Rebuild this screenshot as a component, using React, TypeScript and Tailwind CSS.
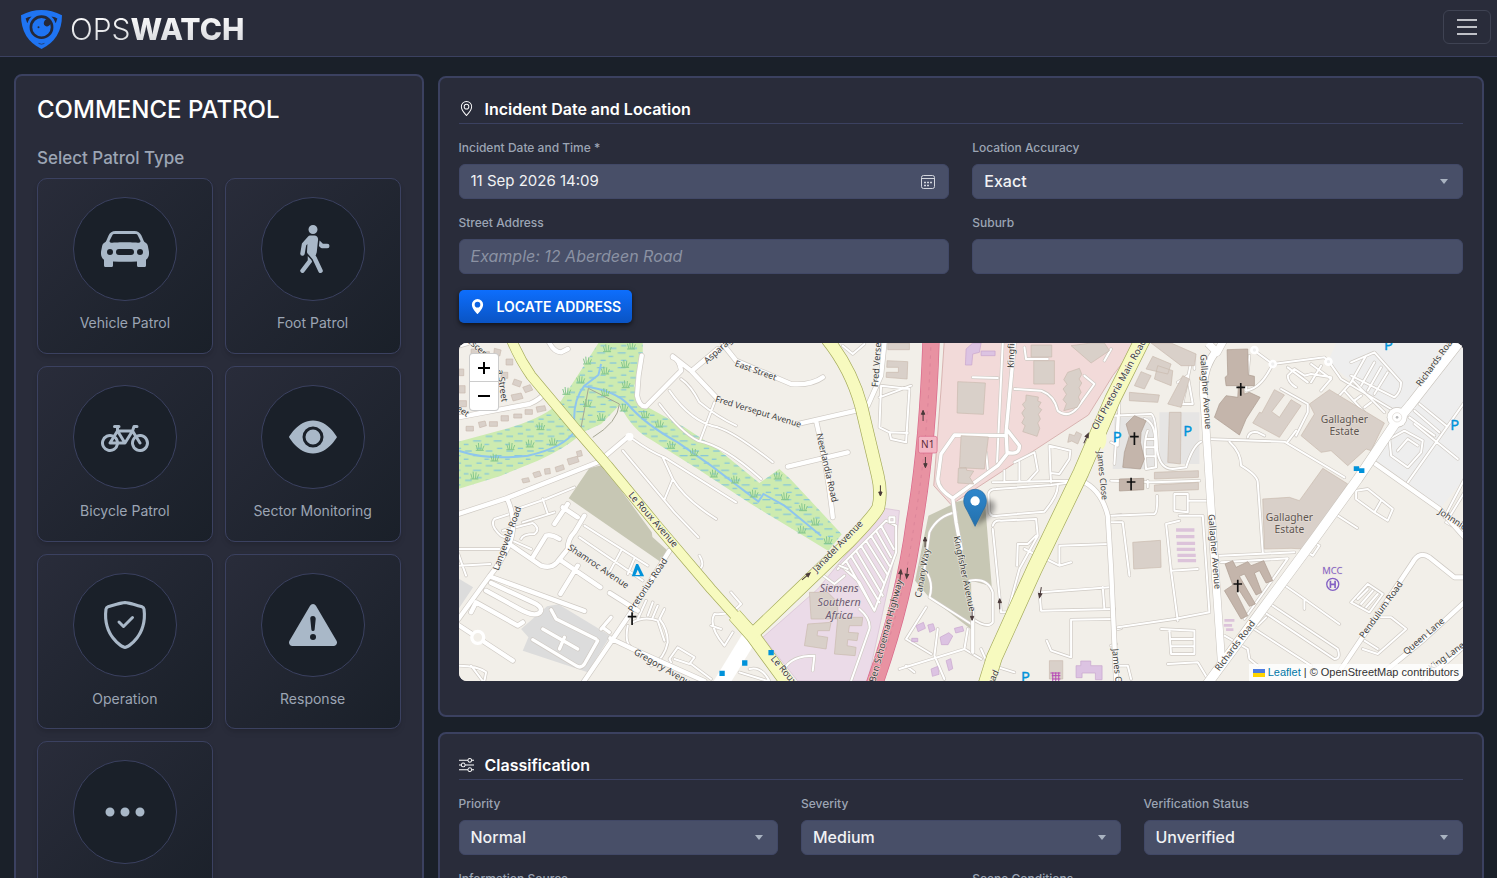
import { useId } from "react";
import type { ReactNode } from "react";
import type { IconType } from "react-icons";
import {
    BsBicycle,
    BsCarFrontFill,
    BsExclamationTriangleFill,
    BsEyeFill,
    BsGeoAlt,
    BsGeoAltFill,
    BsPersonWalking,
    BsShieldCheck,
    BsSliders,
    BsThreeDots,
} from "react-icons/bs";

const PATROL_TYPES: { label: string; icon: IconType }[] = [
    { label: "Vehicle Patrol", icon: BsCarFrontFill },
    { label: "Foot Patrol", icon: BsPersonWalking },
    { label: "Bicycle Patrol", icon: BsBicycle },
    { label: "Sector Monitoring", icon: BsEyeFill },
    { label: "Operation", icon: BsShieldCheck },
    { label: "Response", icon: BsExclamationTriangleFill },
    { label: "Other", icon: BsThreeDots },
];

const CONTROL = "h-[35px] w-full rounded-md border border-[#414866] bg-[#484f68] px-[11px] pb-[2px] text-[#f1f2f4] outline-none focus:border-[#0d6efd]";

/* ---------- Map data, three map units to one pixel ---------- */

const WEST_ROADS_WIDE = [
    "M22 245 L90 232 L235 205 Q270 190 280 172",
    "M22 535 L165 488 L440 380 L535 300",
    "M168 488 Q200 560 175 625 Q150 680 115 722 L22 850",
    "M655 645 L540 830 L390 1050",
    "M22 868 L185 975",
    "M175 625 L270 690 Q300 700 318 680 L350 640 Q350 610 370 590 L400 540",
    "M115 722 L400 826",
    "M328 775 L380 690",
    "M330 675 L448 755",
    "M476 772 L560 825",
    "M478 908 L545 940 L760 1036",
    "M572 60 Q560 120 558 180 Q565 215 585 212 L690 105 Q685 70 665 65",
    "M665 62 L720 105 L800 190",
    "M725 103 L800 40",
    "M815 25 L855 75 L1020 145 Q1080 150 1115 125",
    "M1040 265 L1215 225",
    "M1095 255 Q1130 400 1145 545",
    "M1010 393 L1190 350",
    "M1250 210 L1290 120 L1300 22",
    "M105 765 L205 820 Q260 850 270 825 Q270 810 245 800 L120 742",
    "M60 830 L75 800 L200 870 L215 860",
    "M22 30 L50 22 M295 22 Q310 50 330 50 L350 40",
    "M245 665 L285 600 Q300 595 325 610",
    "M350 505 L310 565 M335 515 L380 545",
];

const WEST_ROADS_NARROW = [
    "M515 345 L670 530 L742 605",
    "M545 310 Q600 350 640 365 L855 500",
    "M635 365 L665 430 L640 492",
    "M665 430 Q700 490 795 550",
    "M655 165 Q720 260 800 275 Q850 290 965 380",
    "M690 130 Q720 150 745 200 Q800 245 855 270",
    "M625 205 Q690 290 740 315 Q820 330 930 430",
    "M790 200 L748 312",
    "M400 570 L590 690",
    "M385 605 L575 735",
    "M510 645 L475 710 M550 668 L530 715",
    "M198 520 L285 490 L370 455 M275 490 L290 535 M215 560 L310 530",
    "M185 532 L130 550 Q115 570 150 600 L240 640",
    "M210 610 Q215 595 250 595 Q270 580 245 562 L155 585",
    "M545 860 Q580 840 620 855 L640 915 M530 870 Q520 920 540 935",
    "M625 850 Q650 880 650 920 Q640 970 600 990",
    "M585 795 L560 850 M605 800 L590 840 M620 810 L605 845 M640 820 L625 850",
    "M660 980 L655 970 L680 935 L730 965 L715 985 L670 970",
    "M720 985 L780 1030",
    "M745 660 Q765 690 740 705",
    "M840 770 L870 805 Q840 840 790 835 Q770 870 820 930 L845 890",
    "M780 870 L810 880",
    "M22 640 L145 640 M22 690 L118 685 M22 655 L45 720",
    "M22 990 Q80 990 105 1010 L100 1036 M60 990 L95 1036",
    "M865 1010 L950 1036 M895 1000 Q930 990 955 1036",
    "M1175 30 L1205 55 L1240 25",
];

const CENTRE_ROADS = [
    "M700 22 L675 290 M675 290 L678 350 Q715 360 715 330 L680 285",
    "M678 355 L650 390 L515 488 Q470 460 470 430 L480 355 L520 298 L672 300",
    "M515 488 L525 560 L540 640",
    "M575 820 L575 950",
];

const CENTRE_ROADS_NARROW = [
    "M665 22 L648 380 M615 350 L620 400 M575 125 L650 127",
    "M525 530 Q470 540 445 590 L430 700",
    "M430 700 Q460 740 445 785 L570 865",
    "M565 735 Q620 725 635 770 L635 860 Q620 880 575 850",
    "M622 475 Q625 460 645 460 L810 448 L870 440 M622 475 L625 530 Q630 545 650 540 L790 528 Q830 480 830 450",
    "M635 440 L865 435 M670 405 L670 440 M715 380 L715 438",
    "M700 380 L760 350 L770 405 L740 438",
    "M805 330 L868 345 L865 370 L835 415 L808 412 Z M808 412 L810 440",
    "M635 570 Q640 552 660 555 L765 550 L770 600 L715 700 L680 830 L660 830 L635 580",
    "M765 600 L740 625 L710 625 L708 690 M730 640 L760 655",
    "M795 670 L835 690 L870 680 M835 690 L835 630 L985 625",
    "M780 770 L985 755 M775 770 L780 825 L1000 820 M965 755 L970 820",
    "M1000 850 L870 852 L870 965 L810 945 L797 915",
    "M355 1000 L550 940 L600 970 M375 990 L400 1010 M435 815 L375 910 L450 955",
    "M470 880 L460 960 L490 1030 M550 940 L560 880",
    "M600 940 L620 985 L700 1010",
    "M295 185 L390 150 M300 150 L385 160 L375 320 L330 310 L325 290 L295 275 Z M325 290 L380 292",
    "M730 35 L735 70 L800 70 M990 40 L970 75",
    "M700 160 L780 165 Q820 180 830 225 Q860 250 890 215 L940 145 L910 120",
    "M10 1000 Q30 960 100 960 L95 1005 M210 1036 L265 880 Q270 850 235 820",
    "M1000 540 L1020 538 M1000 560 L1020 558 M1010 880 L1020 878",
    "M180 690 L235 740 L280 825 L345 650 L345 570 L315 555 L170 700",
    "M195 675 L280 825 M210 660 L295 800 M225 645 L305 780 M240 630 L310 745 M255 615 L318 715 M270 600 L325 690 M285 585 L330 665 M300 570 L338 640",
    "M120 715 L160 745 L190 720",
];

const EAST_ROADS_NARROW = [
    "M430 45 L485 85 L640 65 L655 80 L690 130 L840 220",
    "M485 85 Q450 160 405 165 L415 60",
    "M555 155 Q530 140 530 120 L550 100 L580 120 L600 115 L660 125",
    "M600 85 L660 130 L630 165 M630 90 L600 140",
    "M530 95 L590 140 M510 160 L590 205 L590 230 L555 300",
    "M285 310 L520 318 L700 425 M355 318 Q390 350 390 390 Q440 420 440 440 L455 650",
    "M410 305 Q415 285 440 290 L460 300 M530 318 L555 285",
    "M325 660 L550 650 M330 680 L530 668 L400 850",
    "M720 80 L790 50 L870 140 Q870 170 850 185 L720 120",
    "M765 60 L720 140 M790 80 L750 150 M810 95 L770 165 M830 110 L790 175 M680 185 L725 135 L820 230",
    "M700 165 L760 230 M730 195 L750 180 M760 215 L780 200",
    "M925 205 L1005 270 M910 225 L985 290 M895 245 L970 300 M910 265 L1040 370 M1060 200 L890 440",
    "M835 310 L880 285 L935 315 L930 350 L890 395 L840 360 Z M860 345 L890 310 L920 330",
    "M735 465 L770 460 L845 520 L830 555 L790 530 L735 490 Z M790 530 L810 495",
    "M665 530 L738 577 M590 650 L605 620 L625 630 L605 660 Z",
    "M515 745 L580 790 L685 865 M580 790 L580 820",
    "M470 800 L680 940 Q690 970 670 970 L460 830",
    "M430 880 L600 990 M440 870 L465 845 M340 900 L410 940 L415 970 L440 990",
    "M720 800 L770 745 L815 775 L775 830 Z M740 790 L770 760 M750 805 L785 765 M765 815 L800 775",
    "M810 845 L840 845 L885 880 L800 955 L755 940 M760 915 L800 940",
    "M0 240 L120 235 Q135 240 138 340 Q145 400 185 400 L225 395 Q245 330 270 318",
    "M20 240 L10 385 M180 60 L240 80 L215 200",
    "M100 250 Q135 260 132 330 L135 395 L105 400 Q95 320 110 285 M105 310 H130 M103 335 H132 M104 362 H134",
    "M150 22 L250 60 L250 100 M200 140 L230 120 L245 205 L200 205",
    "M0 540 L130 535 Q140 530 138 480 M190 475 L230 475 L230 530 L190 525 Z M230 495 L290 495",
    "M205 540 L275 540 L295 830 L190 850 L20 875 M205 555 L165 565 L180 705 L260 700 M180 705 L200 855",
    "M0 560 L35 560 L55 720 M150 880 L250 885 L250 955 L180 955 L175 885 M180 910 L250 910 M180 932 L250 932",
    "M170 985 L260 980 L290 1030 M0 930 L15 925 M20 990 L50 990 L60 1030",
    "M0 435 L130 440 L265 435 M110 435 L110 455 M0 320 L20 330 L25 200",
    "M1060 470 L1005 560 L1060 590 M1060 430 L1000 545",
];

const EAST_ROADS = [
    "M780 375 L985 520 L1060 605",
    "M690 1000 L905 680 Q925 645 955 665 L1030 725 L1060 725",
    "M830 1000 L940 910 L1060 800",
    "M940 1036 L1060 930",
    "M-90 435 Q-30 460 -10 540 L0 700 L15 1036",
];

const BUILDINGS = [
    // west estate
    "M60 40 h28 v22 h-28 Z M95 48 h20 v30 h-20 Z M130 38 l20 5 -4 18 -18 -5 Z",
    "M45 272 h22 v14 h-22 Z M82 260 l20 -4 4 14 -20 6 Z M115 258 h24 v14 h-24 Z M150 240 h22 v16 h-22 Z M188 235 h24 v12 h-24 Z M222 222 h22 v14 h-22 Z M255 214 l26 -4 4 14 -26 6 Z",
    "M180 178 l30 -6 6 16 -30 8 Z M215 155 l22 -8 8 16 -22 8 Z M190 130 l22 8 -6 16 -22 -8 Z M150 110 l20 0 0 18 -20 0 Z M165 70 l20 0 0 18 -20 0 Z",
    "M212 430 l20 -4 4 12 -20 4 Z M245 412 l20 -6 6 14 -20 6 Z M280 400 l16 -2 2 16 -16 2 Z M312 395 l24 -8 4 14 -24 8 Z M348 370 l30 -8 6 16 -30 10 Z M376 348 l14 -4 4 16 -14 4 Z",
    "M24 100 h14 v20 h-14 Z M24 150 h18 v22 h-18 Z M24 195 h22 v18 h-22 Z",
    // Siemens and verseput
    "M1075 770 L1130 770 L1160 800 L1160 850 L1080 850 Z M1070 865 L1140 860 L1135 885 L1100 885 L1098 900 L1130 905 L1125 940 L1060 930 Z",
    "M1160 845 L1235 845 L1232 870 L1195 870 L1192 890 L1222 892 L1218 915 L1190 912 L1188 930 L1215 935 L1212 960 L1150 955 Z",
    "M1310 22 H1375 V42 H1310 Z M1308 75 L1370 78 L1368 130 L1305 125 L1306 110 H1342 V95 H1307 Z",
    // retail
    "M1520 138 L1603 142 L1597 236 L1518 232 Z M1530 300 L1612 304 L1600 400 L1525 396 Z M1522 398 L1545 396 L1547 404 L1568 406 L1556 425 L1568 445 L1520 442 Z",
    "M1740 28 h62 v36 h-62 Z M1748 75 h62 v70 h-62 Z",
    "M1725 178 L1762 184 L1760 196 L1770 200 L1762 214 L1772 222 L1762 236 L1768 250 L1760 262 L1766 278 L1758 302 L1715 288 L1722 270 L1712 262 L1720 246 L1712 232 L1722 218 L1714 206 L1724 196 Z",
    "M1850 110 L1885 98 L1892 116 L1884 130 L1892 142 L1884 156 L1890 170 L1882 184 L1888 198 L1878 215 L1838 225 L1846 204 L1836 192 L1846 176 L1836 160 L1848 146 L1838 132 Z",
    "M1860 30 L1920 22 H1960 L1975 45 L1920 82 Z M1855 295 L1870 300 L1876 288 L1892 296 L1880 325 L1862 316 L1850 320 Z",
    "M1795 975 H1835 V1030 H1795 Z",
    // Gallagher
    "M2100 22 H2160 L2235 55 L2230 90 L2190 90 Z M2105 62 L2160 85 L2150 115 L2085 100 Z M2070 108 L2100 120 L2080 160 L2050 150 Z M2120 90 L2165 105 L2160 150 L2110 130 Z",
    "M2035 170 L2125 178 L2120 200 L2035 195 Z M2195 120 L2215 130 L2190 215 L2150 205 Z M2155 230 H2190 L2188 385 L2150 380 Z",
    "M2110 410 L2242 405 V425 L2110 430 Z M2110 448 L2242 440 V462 L2110 467 Z M2045 620 L2128 614 L2130 695 L2048 700 Z",
    "M2470 162 L2500 178 L2462 228 L2485 245 L2520 192 L2550 210 L2485 305 L2405 262 L2425 230 L2432 232 Z",
    "M2635 162 L2800 262 L2760 345 L2745 340 L2690 390 L2640 345 L2610 350 L2550 300 L2590 235 L2575 205 Z",
    "M2615 398 L2690 445 L2560 640 L2520 638 L2440 640 L2435 490 L2515 485 L2545 495 Z",
];

const DARK_BUILDINGS = [
    "M348 42 L410 40 L412 118 L430 122 L430 150 L395 150 L400 175 L415 170 L447 185 L405 250 L385 298 L310 245 L325 205 L345 180 L380 185 L382 150 L345 150 L342 125 L350 118 Z",
    "M45 265 L70 240 L105 255 L90 290 L88 320 L100 370 L88 400 L35 395 L40 350 L55 300 Z",
    "M25 430 L98 428 V462 L25 466 Z",
    "M342 685 L365 675 L375 695 L410 678 L420 690 L458 675 L485 735 L465 742 L445 705 L430 712 L452 770 L435 778 L400 715 L385 722 L433 805 L415 812 L385 765 L375 770 L410 840 L390 850 L340 765 L365 748 Z",
];

const ARROWS = [
    { x: 1416, y: 240, angle: 0 },
    { x: 1423, y: 380, angle: 180 },
    { x: 1288, y: 465, angle: 180 },
    { x: 1065, y: 722, angle: 50 },
    { x: 1422, y: 620, angle: 0 },
    { x: 1348, y: 718, angle: 5 },
    { x: 1368, y: 712, angle: 185 },
    { x: 1563, y: 838, angle: 180 },
    { x: 1646, y: 805, angle: 0 },
    { x: 1768, y: 770, angle: 190 },
    { x: 1905, y: 308, angle: 25 },
];

const STREET_LABELS = [
    { text: "Le Roux Avenue", x: 606, y: 552, angle: 49, size: 28 },
    { text: "Le Roux", x: 998, y: 1004, angle: 50, size: 28 },
    { text: "Shamroc Avenue", x: 442, y: 692, angle: 34, size: 27 },
    { text: "Langeveld Road", x: 168, y: 608, angle: -70, size: 27 },
    { text: "Pretorius Road", x: 590, y: 748, angle: -56, size: 27 },
    { text: "Gregory Avenue", x: 640, y: 998, angle: 30, size: 27 },
    { text: "East Street", x: 914, y: 104, angle: 20, size: 26 },
    { text: "Asparagus", x: 812, y: 34, angle: -42, size: 27 },
    { text: "Fred Verseput Avenue", x: 922, y: 228, angle: 17, size: 26 },
    { text: "Fred Verseput", x: 1278, y: 66, angle: -86, size: 27 },
    { text: "Neerlandia Road", x: 1128, y: 396, angle: 77, size: 27 },
    { text: "Janadel Avenue", x: 1160, y: 632, angle: -46, size: 28 },
    { text: "Ben Schoeman Highway", x: 1305, y: 886, angle: -75, size: 28 },
    { text: "Canary Way", x: 1414, y: 712, angle: -80, size: 27 },
    { text: "Kingfisher Avenue", x: 1540, y: 714, angle: 78, size: 27 },
    { text: "Kingfisher", x: 1681, y: 32, angle: -88, size: 27 },
    { text: "Old Pretoria Main Road", x: 2004, y: 146, angle: -61, size: 28 },
    { text: "Road", x: 1622, y: 1034, angle: -65, size: 27 },
    { text: "James Close", x: 1954, y: 420, angle: 84, size: 26 },
    { text: "James Crescent", x: 2002, y: 1035, angle: 84, size: 27 },
    { text: "Gallagher Avenue", x: 2264, y: 168, angle: 86, size: 27 },
    { text: "Gallagher Avenue", x: 2290, y: 648, angle: 85, size: 27 },
    { text: "Richards Road", x: 2954, y: 76, angle: -54, size: 27 },
    { text: "Richards Road", x: 2352, y: 930, angle: -53, size: 27 },
    { text: "Johnnic Road", x: 3034, y: 570, angle: 33, size: 27 },
    { text: "Pendulum Road", x: 2790, y: 822, angle: -54, size: 27 },
    { text: "Queen Lane", x: 2918, y: 902, angle: -41, size: 27 },
    { text: "King Lane", x: 2986, y: 962, angle: -36, size: 27 },
    { text: "Oba Crescent", x: 52, y: 10, angle: 42, size: 26 },
    { text: "a Street", x: 154, y: 150, angle: 82, size: 27 },
    { text: "Street", x: 22, y: 216, angle: 35, size: 26 },
];

const PLACE_LABELS = [
    { lines: ["Gallagher", "Estate"], x: 2680, y: 262 },
    { lines: ["Gallagher", "Estate"], x: 2515, y: 556 },
];

const CROSSES = [
    [543, 848],
    [2050, 308],
    [2040, 444],
    [2369, 160],
    [2360, 750],
];

const PARKINGS = [
    [1998, 304],
    [2210, 288],
    [2812, 30],
    [3011, 268],
    [1723, 1026],
];

// little grass tufts scattered over the wetland
const TUFTS = [
    [468, 38], [540, 30], [408, 75], [462, 105], [522, 85], [388, 132], [346, 166], [408, 202], [462, 170], [524, 146],
    [86, 334], [178, 332], [236, 324], [306, 318], [130, 366], [70, 420], [268, 272], [450, 244], [518, 216], [582, 236],
    [624, 264], [660, 328], [728, 350], [788, 414], [852, 432], [908, 474], [980, 420], [1002, 482], [1056, 515], [1092, 558], [1052, 582], [1130, 614],
];

function RoadLayer({ paths, width, casing = "#cfcac4" }: { paths: string[]; width: number; casing?: string }) {
    const d = paths.join(" ");
    return (
        <g fill="none" strokeLinecap="round" strokeLinejoin="round">
            <path d={d} stroke={casing} strokeWidth={width + 4} />
            <path d={d} stroke="#fff" strokeWidth={width} />
        </g>
    );
}

function MapCanvas() {
    const wetland =
        "M22 318 L180 275 Q290 240 330 195 Q380 120 442 22 H575 V60 L550 150 Q560 200 590 215 L700 275 L800 340 L925 442 L985 400 L1020 432 L1172 596 L1132 646 L1020 578 L900 505 L740 400 L600 312 Q545 285 506 208 L450 265 L395 290 Q350 335 260 375 L150 420 L22 460 Z";
    const leRoux = "M180 10 Q205 70 240 120 L370 275 L470 390 L620 572 L780 760 L850 838 L905 890";
    const janadel = "M905 895 L1020 785 L1190 622 Q1270 540 1282 515 Q1292 470 1280 420 L1230 210 Q1200 100 1128 10";
    const oldPretoria = "M2080 0 L1985 190 L1890 410 L1750 700 L1630 965 L1605 1045";
    const highway = "M1440 10 Q1430 330 1390 560 Q1360 790 1270 1045";
    const gallagher = "M2300 40 Q2250 100 2258 180 L2268 330 L2285 600 L2312 990";
    const richards = "M3040 0 L2880 205 L2838 255 L2720 430 L2590 610 L2420 840 L2265 1050";

    return (
        <svg
            className="block h-full w-full font-['Noto_Sans',sans-serif]"
            viewBox="22 22 3017 1014"
            preserveAspectRatio="xMidYMid slice"
            role="img"
            aria-label="Incident map"
        >
            <defs>
                <pattern id="wetland-dashes" width="62" height="44" patternUnits="userSpaceOnUse">
                    <path d="M4 8 h24 M38 18 h14 M14 30 h16 M42 38 h20" stroke="#6fbbe8" strokeWidth="3" />
                </pattern>
                <linearGradient id="pin-fill" x1="0" y1="0" x2="0" y2="1">
                    <stop offset="0" stopColor="#2e86cc" />
                    <stop offset="1" stopColor="#2471ad" />
                </linearGradient>
                <filter id="pin-blur" x="-50%" y="-50%" width="200%" height="200%">
                    <feGaussianBlur stdDeviation="8" />
                </filter>
            </defs>
            <rect width="3060" height="1060" fill="#f2efe9" />

            {/* Land use */}
            <path d={wetland} fill="#cdebb0" />
            <path d={wetland} fill="url(#wetland-dashes)" />
            <g fill="none" stroke="#8ec5ee" strokeWidth="6">
                <path d="M22 345 Q110 375 230 360 Q340 335 372 285 Q360 200 400 150 L442 118 L450 85" />
                <path d="M400 152 Q490 165 530 205 Q580 265 680 320 L780 390 L922 498 L937 475 L1000 510 L1110 600" />
            </g>
            <path d="M390 275 L412 158 L505 205 Q500 260 425 305" fill="none" stroke="#a6a694" strokeWidth="3" />
            <path
                d={TUFTS.map(([x, y]) => `M${x - 12} ${y + 10} h24 M${x - 6} ${y + 10} l-5 -16 M${x - 2} ${y + 10} l-2 -22 M${x + 3} ${y + 10} l2 -20 M${x + 7} ${y + 10} l6 -14`).join(" ")}
                fill="none"
                stroke="#86c78d"
                strokeWidth="3"
            />
            <path d="M415 397 L455 388 L602 590 L604 604 L650 645 L630 680 L353 488 Z" fill="#c7c7b4" />
            <path d="M1510 500 L1600 480 L1622 752 L1560 735 L1562 882 L1430 780 L1392 735 L1432 540 L1500 508 Z" fill="#c7c7b4" />
            <path d="M288 812 L322 806 L478 900 L410 1010 L215 945 L232 905 L210 880 Z M22 728 L66 755 L22 820 Z" fill="#dcdcdc" />
            <path d="M1480 10 H2068 L1985 120 L1912 238 L1500 507 L1448 450 L1470 160 Z" fill="#f2dad9" stroke="#d8b3b1" strokeWidth="3" />
            <path d="M1300 518 L1345 525 L1332 660 L1250 1036 H1040 L935 905 L1100 760 Z" fill="#ebdbe8" stroke="#d5bdd2" strokeWidth="2" />
            <path d="M2655 22 H3039 V430 L2970 515 L2775 375 L2850 250 L2790 210 L2630 80 Z" fill="#eeeeee" />
            <path d="M1990 245 H2115 V400 H1985 Z M2125 230 H2245 V385 H2125 Z" fill="#e6e5e4" />

            {/* Service roads */}
            <RoadLayer paths={WEST_ROADS_NARROW} width={6} />
            <RoadLayer paths={WEST_ROADS_WIDE} width={13} />
            <RoadLayer paths={["M300 822 L315 850 L435 910 M275 880 L380 940 M245 912 L375 990 Q390 1000 400 985 L440 915 M340 905 L325 940 M450 880 L480 845 M455 875 L475 890"]} width={10} />
            <g transform="translate(990 0)">
                <RoadLayer paths={CENTRE_ROADS_NARROW} width={6} />
                <RoadLayer paths={CENTRE_ROADS} width={10} />
            </g>
            <g transform="translate(1980 0)">
                <RoadLayer paths={EAST_ROADS_NARROW} width={6} />
            </g>
            <circle cx="80" cy="905" r="18" fill="#f2efe9" stroke="#fff" strokeWidth="10" />
            <circle cx="535" cy="303" r="12" fill="#fff" />

            {/* Buildings */}
            <path d={BUILDINGS.join(" ")} fill="#d9d0c9" stroke="#c8b9ad" strokeWidth="2" />
            <g transform="translate(1980 0)">
                <path d={DARK_BUILDINGS.join(" ")} fill="#c4b5ab" stroke="#ab9a8e" strokeWidth="2" />
                <path d="M195 578 h55 v10 h-55 Z M195 598 h55 v10 h-55 Z M197 618 h55 v10 h-55 Z M197 636 h55 v10 h-55 Z M199 654 h55 v10 h-55 Z M200 670 h55 v10 h-55 Z M340 850 h30 v8 h-30 Z M338 865 h25 v8 h-25 Z M345 878 h22 v8 h-22 Z" fill="#dcc3da" />
            </g>
            <path
                d="M1545 40 L1565 22 H1590 L1585 50 L1565 55 L1562 88 L1543 88 Z M1590 46 h42 v14 h-42 Z M1395 870 l22 -10 6 18 -22 10 Z M1430 868 l16 -4 6 18 -16 8 Z M1382 908 h18 v10 h-18 Z M1467 905 l26 -14 12 10 -14 26 -20 0 Z M1510 878 l24 -6 4 14 -24 6 Z M1440 1000 l20 -8 4 24 -20 6 Z M1485 975 l14 -6 6 30 -12 6 Z M1875 990 h14 v-14 h30 v14 h34 v42 h-20 v-20 h-40 v14 h-18 Z"
                fill="#dcc3e2"
                stroke="#c7a5cd"
                strokeWidth="2"
            />
            <RoadLayer paths={["M1165 690 L1190 700 M1315 545 h15 v15 h-15 Z"]} width={6} />

            {/* Trunk network */}
            <path d="M895 905 L800 1060" stroke="#fff" strokeWidth="46" />
            <g fill="none" strokeLinejoin="round">
                <g transform="translate(1980 0)">
                    <RoadLayer paths={EAST_ROADS} width={13} />
                </g>
                <path d={`${gallagher} M2325 0 L2298 50 L2270 22`} stroke="#c9c4bd" strokeWidth="25" />
                <path d={richards} stroke="#c9c4bd" strokeWidth="31" />
                <circle cx="2838" cy="245" r="31" fill="#c9c4bd" />
                <path d={`${gallagher} M2325 0 L2298 50 L2270 22`} stroke="#fff" strokeWidth="22" />
                <path d={richards} stroke="#fff" strokeWidth="28" />
                <circle cx="2838" cy="245" r="29" fill="#fff" />
                <circle cx="2838" cy="245" r="14" stroke="#ddd8d2" strokeWidth="2" />
                <circle cx="2838" cy="245" r="4" fill="#bbb" />
                {[[2410, 43], [2465, 85], [2632, 78]].map(([x, y]) => (
                    <circle key={x} cx={x} cy={y} r="9" fill="#eee" stroke="#fff" strokeWidth="8" />
                ))}

                <path d={oldPretoria} stroke="#a5ab5c" strokeWidth="49" />
                <path d={leRoux} stroke="#a5ab5c" strokeWidth="32" />
                <path d="M850 838 L905 900 L1015 1050" stroke="#a5ab5c" strokeWidth="44" />
                <path d={janadel} stroke="#a5ab5c" strokeWidth="40" />
                <path d="M1955 290 Q1962 320 1948 335" stroke="#f7fabf" strokeWidth="18" />
                <path d={oldPretoria} stroke="#f7fabf" strokeWidth="45" />
                <path d={leRoux} stroke="#f7fabf" strokeWidth="28" />
                <path d="M850 838 L905 900 L1015 1050" stroke="#f7fabf" strokeWidth="40" />
                <path d={janadel} stroke="#f7fabf" strokeWidth="36" />

                <path d={highway} stroke="#d9688a" strokeWidth="52" />
                <path d={highway} stroke="#e892a2" strokeWidth="48" />
                <path d={highway} stroke="#d57f95" strokeWidth="2" strokeDasharray="10 14" />
            </g>

            {/* One way arrows */}
            <g fill="#4a3a3a" stroke="#4a3a3a" strokeWidth="3">
                {ARROWS.map(({ x, y, angle }) => (
                    <path key={`${x}-${y}`} d="M0 16 V-6 M-5 -4 L0 -16 L5 -4 Z" transform={`translate(${x} ${y}) rotate(${angle})`} />
                ))}
            </g>

            {/* Labels */}
            <g textAnchor="middle" fill="#3d3d3d" stroke="#f6f4ef" strokeOpacity="0.7" strokeWidth="4" paintOrder="stroke">
                {STREET_LABELS.map(({ text, x, y, angle, size }) => (
                    <text key={`${text}-${x}`} fontSize={size} transform={`translate(${x} ${y}) rotate(${angle})`} dy="9">
                        {text}
                    </text>
                ))}
            </g>
            <g textAnchor="middle" stroke="#e9e2dc" strokeOpacity="0.6" strokeWidth="4" paintOrder="stroke">
                {PLACE_LABELS.map(({ lines, x, y }) =>
                    lines.map((line, i) => (
                        <text key={`${x}-${line}`} x={x} y={y + i * 36} fontSize="31" fill="#5f5651">
                            {line}
                        </text>
                    ))
                )}
                {["Siemens", "Southern", "Africa"].map((line, i) => (
                    <text key={line} x="1164" y={770 + i * 40} fontSize="32" fontStyle="italic" fill="#6d5a74">
                        {line}
                    </text>
                ))}
                <text x="2644" y="716" fontSize="28" fill="#8461c4">MCC</text>
            </g>
            <g>
                <rect x="1402" y="302" width="56" height="50" rx="6" fill="#f3b7c4" stroke="#d9688a" strokeWidth="2" />
                <text x="1430" y="337" textAnchor="middle" fontSize="30" fill="#5a2a38">N1</text>
            </g>

            {/* Points of interest */}
            <path
                d={CROSSES.map(([x, y]) => `M${x} ${y - 18} V${y + 20} M${x - 13} ${y - 5} H${x + 13}`).join(" ")}
                stroke="#111"
                strokeWidth="5"
            />
            <g fill="#0092da" stroke="#0092da" fontSize="44" textAnchor="middle">
                {PARKINGS.map(([x, y]) => (
                    <text key={x} x={x} y={y + 14}>P</text>
                ))}
            </g>
            <g fill="#0092da">
                <path d="M952 943 h16 v16 h-16 Z M873 974 h16 v16 h-16 Z M805 1005 h16 v16 h-16 Z M2708 392 h16 v14 h-16 Z M2724 398 h16 v14 h-16 Z" />
                <path d="M555 685 h6 L579 722 H542 Z" />
                <path d="M553 718 L560 702 L567 718 Z" fill="#f2efe9" />
            </g>
            <circle cx="2645" cy="746" r="18" fill="none" stroke="#8461c4" strokeWidth="4" />
            <path d="M2638 735 v22 M2652 735 v22 M2638 746 h14" stroke="#8461c4" strokeWidth="5" />
            <path d="M1798 1012 h30 M1802 1020 h26 M1804 1030 h24 M1805 1010 v26 M1814 1010 v26 M1823 1010 v26" stroke="#b648b6" strokeWidth="3" />

            {/* Incident pin */}
            <path d="M1572 572 L1592 506 Q1612 484 1630 500 Q1638 522 1614 544 Z" fill="#000" opacity="0.35" filter="url(#pin-blur)" />
            <path
                d="M1572 461 C1552 461 1538 476 1538 496 C1538 508 1543 516 1549 526 L1572 572 L1595 526 C1601 516 1606 508 1606 496 C1606 476 1592 461 1572 461 Z"
                fill="url(#pin-fill)"
                stroke="#2468a0"
                strokeWidth="2"
            />
            <circle cx="1572" cy="496" r="14" fill="#fff" />
        </svg>
    );
}

function IncidentMap() {
    return (
        <div className="relative mt-5 h-[338px] overflow-hidden rounded-lg bg-[#f2efe9]">
            <MapCanvas />
            <div className="absolute top-[10px] left-[10px] flex w-[30px] flex-col overflow-hidden rounded-sm border border-black/20 bg-white text-black">
                <button type="button" aria-label="Zoom in" className="flex h-7 items-center justify-center border-b border-[#ccc]">
                    <svg viewBox="0 0 12 12" className="h-3 w-3" stroke="currentColor" strokeWidth="2">
                        <path d="M6 0 V12 M0 6 H12" />
                    </svg>
                </button>
                <button type="button" aria-label="Zoom out" className="flex h-7 items-center justify-center">
                    <svg viewBox="0 0 12 12" className="h-3 w-3" stroke="currentColor" strokeWidth="2">
                        <path d="M0 6 H12" />
                    </svg>
                </button>
            </div>
            <div className="absolute right-0 bottom-0 flex items-center gap-[3px] bg-white/80 px-1 font-['Liberation_Sans',sans-serif] text-[11px] leading-[17px] text-[#333]">
                <svg viewBox="0 0 12 8" className="h-2 w-3">
                    <path fill="#4c7be1" d="M0 0h12v4H0z" />
                    <path fill="#ffd500" d="M0 4h12v4H0z" />
                </svg>
                <a href="#leaflet" className="text-[#0078a8]">Leaflet</a>
                <span>| © OpenStreetMap contributors</span>
            </div>
        </div>
    );
}

function Logo() {
    return (
        <a href="#home" className="flex items-center gap-2 pt-[2px]">
            <svg viewBox="0 0 124 118" className="h-[39px] w-[41px]" aria-hidden="true">
                <path d="M0 16 Q62 -16 124 16 Q124 88 62 118 Q0 88 0 16 Z" fill="#1f74f2" />
                <circle cx="62" cy="52" r="32" fill="none" stroke="#252938" strokeWidth="8" />
                <path d="M14 26 Q20 22 32 20 Q22 28 19 40 Z M110 26 Q104 22 92 20 Q102 28 105 40 Z" fill="#252938" />
                <path d="M53 101 Q62 106 71 101" fill="none" stroke="#252938" strokeWidth="2" />
                <path d="M76 28 Q66 36 70 45 Q77 54 86 46 L92 40 L84 28 Z" fill="#252938" />
                <circle cx="53" cy="52" r="3" fill="#252938" />
            </svg>
            <span className="bg-linear-to-b from-white to-[#d3d5da] bg-clip-text text-[30px] leading-9 text-transparent">
                <span className="font-light">OPS</span>
                <span className="font-extrabold">WATCH</span>
            </span>
        </a>
    );
}

function CalendarIcon() {
    return (
        <svg
            viewBox="0 0 14 14"
            className="pointer-events-none absolute top-[11px] right-[14px] h-[14px] w-[14px] text-[#d3d6dd]"
            fill="none"
            stroke="currentColor"
            aria-hidden="true"
        >
            <rect x="0.5" y="0.5" width="13" height="13" rx="2" />
            <path d="M0.5 3.5 H13.5" />
            <path d="M3 7.5 h2 M6 7.5 h2 M9 7.5 h2 M3 10.5 h2 M6 10.5 h2" strokeWidth="1.6" />
        </svg>
    );
}

function Section({ title, icon: Icon, children }: { title: string; icon: IconType; children: ReactNode }) {
    return (
        <section className="rounded-lg border-2 border-[#3b4160] bg-[#292c3a] px-[19px] pt-5 pb-[34px]">
            <h2 className="flex h-[26px] items-start gap-[11px] border-b border-[#3b4160] text-base leading-[22px] font-semibold text-white">
                <Icon className="mt-[3px] h-[15px] w-[15px]" />
                {title}
            </h2>
            {children}
        </section>
    );
}

function Field({ label, id, children }: { label: string; id: string; children: ReactNode }) {
    return (
        <div>
            <label htmlFor={id} className="mb-[6px] block text-xs leading-5 font-medium text-[#9ca5b4]">
                {label}
            </label>
            {children}
        </div>
    );
}

function SelectField({ label, options }: { label: string; options: string[] }) {
    const id = useId();
    return (
        <Field label={label} id={id}>
            <div className="relative">
                <select id={id} className={`${CONTROL} appearance-none text-base font-medium`}>
                    {options.map((option) => (
                        <option key={option}>{option}</option>
                    ))}
                </select>
                <svg viewBox="0 0 8 5" className="pointer-events-none absolute top-[15px] right-[15px] h-[5px] w-2" fill="#a9b3c1">
                    <path d="M0 0 H8 L4 5 Z" />
                </svg>
            </div>
        </Field>
    );
}

function PatrolCard({ label, icon: Icon }: { label: string; icon: IconType }) {
    return (
        <button
            type="button"
            className="flex aspect-square flex-col items-center rounded-[10px] border border-[#3b4160] bg-linear-to-br from-[#292c3a] to-[#1a2029] pt-[18px] shadow-md hover:border-[#0d6efd]"
        >
            <span className="flex h-[104px] w-[104px] items-center justify-center rounded-full border border-[#3b4160] bg-[#1a2029]">
                <Icon className="h-12 w-12 text-[#a9b8c8]" />
            </span>
            <span className="mt-3 text-sm leading-5 text-[#9ca5b4]">{label}</span>
        </button>
    );
}

export default function App() {
    return (
        <div className="min-h-screen bg-[#1a2029] font-[Inter,sans-serif]">
            <header className="flex h-[57px] items-center justify-between border-b border-[#3b4160] bg-[#292c3a] pr-[6px] pl-[21px]">
                <Logo />
                <button
                    type="button"
                    aria-label="Toggle navigation"
                    className="mb-[2px] flex h-[34px] w-12 items-center justify-center rounded-md border border-[#3f4353] text-[#bfc1c7]"
                >
                    <svg viewBox="0 0 22 18" className="h-[18px] w-[22px]" stroke="currentColor" strokeWidth="2">
                        <path d="M1 2 H21 M1 9 H21 M1 16 H21" />
                    </svg>
                </button>
            </header>

            <main className="grid grid-cols-[9fr_23fr] gap-[14px] pt-[17px] pr-[13px] pb-4 pl-[14px]">
                {/* Patrol picker */}
                <aside className="rounded-lg border-2 border-[#3b4160] bg-[#292c3a] px-[21px] pt-[18px] pb-6">
                    <h1 className="text-2xl leading-8 font-medium text-white">COMMENCE PATROL</h1>
                    <h2 className="mt-5 text-[17px] leading-6 font-medium text-[#9ca5b4]">Select Patrol Type</h2>
                    <div className="mt-2 grid grid-cols-2 gap-3">
                        {PATROL_TYPES.map((type) => (
                            <PatrolCard key={type.label} {...type} />
                        ))}
                    </div>
                </aside>

                {/* Incident form */}
                <form className="flex flex-col gap-[15px] pt-[2px]">
                    <Section title="Incident Date and Location" icon={BsGeoAlt}>
                        <div className="mt-[14px] grid grid-cols-2 gap-x-[23px] gap-y-[14px]">
                            <Field label="Incident Date and Time *" id="incident-date">
                                <div className="relative">
                                    <input
                                        id="incident-date"
                                        type="text"
                                        defaultValue="11 Sep 2026 14:09"
                                        className={`${CONTROL} text-[15px]`}
                                    />
                                    <CalendarIcon />
                                </div>
                            </Field>
                            <SelectField label="Location Accuracy" options={["Exact", "Approximate"]} />
                            <Field label="Street Address" id="street-address">
                                <input
                                    id="street-address"
                                    type="text"
                                    placeholder="Example: 12 Aberdeen Road"
                                    className={`${CONTROL} text-base placeholder:text-[#8b92a3] placeholder:italic`}
                                />
                            </Field>
                            <Field label="Suburb" id="suburb">
                                <input id="suburb" type="text" className={`${CONTROL} text-base`} />
                            </Field>
                        </div>
                        <button
                            type="button"
                            className="mt-4 flex h-[33px] items-center gap-3 rounded-[5px] bg-linear-to-b from-[#0d6efd] to-[#0a54c4] px-[11px] text-sm font-semibold text-white shadow-[0_2px_5px_rgba(0,0,0,0.6)]"
                        >
                            <BsGeoAltFill className="h-[15px] w-[15px]" />
                            LOCATE ADDRESS
                        </button>
                        <IncidentMap />
                    </Section>

                    <Section title="Classification" icon={BsSliders}>
                        <div className="mt-[14px] grid grid-cols-3 gap-x-[23px]">
                            <SelectField label="Priority" options={["Normal", "High"]} />
                            <SelectField label="Severity" options={["Medium", "Low", "High"]} />
                            <SelectField label="Verification Status" options={["Unverified", "Verified"]} />
                        </div>
                        <div className="mt-[14px] grid grid-cols-2 gap-x-[23px]">
                            <SelectField label="Information Source" options={["Patroller"]} />
                            <SelectField label="Scene Conditions" options={["Safe"]} />
                        </div>
                    </Section>
                </form>
            </main>
        </div>
    );
}
